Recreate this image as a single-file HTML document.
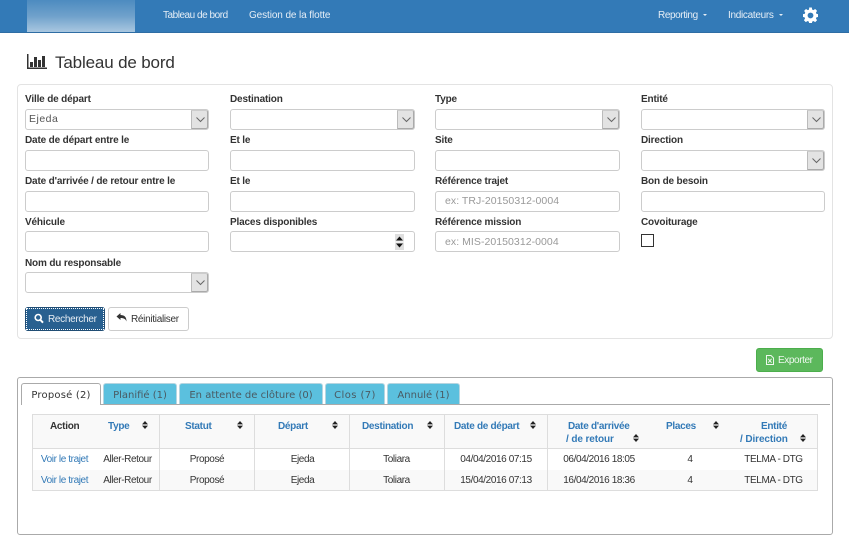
<!DOCTYPE html>
<html lang="fr"><head><meta charset="utf-8"><title>Tableau de bord</title>
<style>
*{box-sizing:border-box}
html,body{margin:0;padding:0;width:849px;height:547px;overflow:hidden;background:#fff;font-family:"Liberation Sans",Arial,sans-serif;color:#333}
.a{position:absolute;white-space:nowrap}
#nav{left:0;top:0;width:849px;height:33px;background:#337ab7;border-bottom:1px solid #2e6da4}
#logo{left:27px;top:0;width:108px;height:32px;background:linear-gradient(180deg,#4d8bc0 0%,#6fa1cb 50%,#a9c7e0 100%)}
.n{color:#e6eef6;font-size:10px;top:10px;line-height:12px}
.car{display:inline-block;width:0;height:0;border-top:2px solid #e6eef6;border-left:2.5px solid transparent;border-right:2.5px solid transparent;margin-left:5px;vertical-align:2px;letter-spacing:0}
.l{font-size:10px;font-weight:bold;line-height:12px;color:#333;letter-spacing:-.16px}
.i{background:#fff;border:1px solid #ccc;border-radius:3px;height:21px;width:185px;font-size:10.5px;line-height:19px;padding-left:8px}
.ph{color:#999;padding-left:9px;letter-spacing:.05px}
.sb{position:absolute;right:0;top:0;width:17px;height:19px;background:#e3e3e3;border-left:1px solid #bbb;border-right:1px solid #aaa;border-top:1px solid #ccc;border-bottom:1px solid #aaa;border-radius:0 2px 2px 0}
.sb svg{position:absolute;left:2px;top:4px}
.tab{top:383px;height:21px;background:#5bc0de;border:1px solid #b6d5e0;border-bottom:0;border-radius:3px 3px 0 0;font-family:"DejaVu Sans",sans-serif;font-size:10px;line-height:23px;text-align:center;color:#4a5a62}
.th{font-size:10px;font-weight:bold;line-height:13px;color:#337ab7;letter-spacing:-.3px}
.td{font-size:10px;line-height:12px;color:#333;transform:translateX(-50%);letter-spacing:-.4px}
.v{background:#ddd;width:1px}
.so{width:6px;height:8px}
</style></head><body>
<div class="a" id="nav"></div>
<div class="a" id="logo"></div>
<div class="a n" style="left:163px;letter-spacing:-.47px">Tableau de bord</div>
<div class="a n" style="left:249px;letter-spacing:-.1px">Gestion de la flotte</div>
<div class="a n" style="left:658px;letter-spacing:-.4px">Reporting<span class="car"></span></div>
<div class="a n" style="left:728px;letter-spacing:-.3px">Indicateurs<span class="car"></span></div>
<svg class="a" style="left:803px;top:7px" width="15" height="16" viewBox="0 0 16 16"><path fill="#fff" fill-rule="evenodd" d="M6.600 0h2.800l.4 2.200 1.300.6L13 1.600l2 2-1.200 1.900.6 1.300 2.200.4v2.800l-2.200.4-.6 1.300 1.200 1.900-2 2-1.900-1.200-1.300.6-.4 2.200H6.600l-.4-2.200-1.300-.6L3 15.600l-2-2 1.200-1.900-.6-1.300L-.4 10V7.200l2.200-.4.6-1.300L1.200 3.600l2-2 1.900 1.200 1.300-.6zM8 5.400a3.100 3.100 0 1 0 0 6.200 3.100 3.100 0 0 0 0-6.200z"/></svg>

<svg class="a" style="left:26px;top:53px" width="21" height="17" viewBox="0 0 21 17"><path fill="#333" d="M1 1h1.500v13.500H21V16H1z"/><rect x="4" y="9" width="3" height="5" fill="#333"/><rect x="8" y="4" width="3" height="10" fill="#333"/><rect x="12" y="7" width="3" height="7" fill="#333"/><rect x="16" y="3" width="3" height="11" fill="#333"/></svg>
<div class="a" style="left:55px;top:53px;font-size:17px;line-height:20px;color:#333;letter-spacing:-.15px">Tableau de bord</div>

<div class="a" style="left:17px;top:84px;width:816px;height:255px;border:1px solid #e3e3e3;border-radius:4px"></div>

<div class="a l" style="left:25px;top:94px">Ville de départ</div>
<div class="a l" style="left:230px;top:94px">Destination</div>
<div class="a l" style="left:435px;top:94px">Type</div>
<div class="a l" style="left:641px;top:94px">Entité</div>
<div class="a i" style="left:25px;top:109px;width:184px;color:#555;letter-spacing:.5px;padding-left:3px">Ejeda<div class="sb"><svg width="13" height="10" viewBox="0 0 13 10"><path d="M2.500 2.500l4 4 4-4" fill="none" stroke="#666" stroke-width="1"/></svg></div></div>
<div class="a i" style="left:230px;top:109px"><div class="sb"><svg width="13" height="10" viewBox="0 0 13 10"><path d="M2.500 2.500l4 4 4-4" fill="none" stroke="#666" stroke-width="1"/></svg></div></div>
<div class="a i" style="left:435px;top:109px"><div class="sb"><svg width="13" height="10" viewBox="0 0 13 10"><path d="M2.500 2.500l4 4 4-4" fill="none" stroke="#666" stroke-width="1"/></svg></div></div>
<div class="a i" style="left:641px;top:109px;width:184px"><div class="sb"><svg width="13" height="10" viewBox="0 0 13 10"><path d="M2.500 2.500l4 4 4-4" fill="none" stroke="#666" stroke-width="1"/></svg></div></div>

<div class="a l" style="left:25px;top:135px">Date de départ entre le</div>
<div class="a l" style="left:230px;top:135px">Et le</div>
<div class="a l" style="left:435px;top:135px">Site</div>
<div class="a l" style="left:641px;top:135px">Direction</div>
<div class="a i" style="left:25px;top:150px;width:184px"></div>
<div class="a i" style="left:230px;top:150px"></div>
<div class="a i" style="left:435px;top:150px"></div>
<div class="a i" style="left:641px;top:150px;width:184px"><div class="sb"><svg width="13" height="10" viewBox="0 0 13 10"><path d="M2.500 2.500l4 4 4-4" fill="none" stroke="#666" stroke-width="1"/></svg></div></div>

<div class="a l" style="left:25px;top:176px">Date d'arrivée / de retour entre le</div>
<div class="a l" style="left:230px;top:176px">Et le</div>
<div class="a l" style="left:435px;top:176px">Référence trajet</div>
<div class="a l" style="left:641px;top:176px">Bon de besoin</div>
<div class="a i" style="left:25px;top:191px;width:184px"></div>
<div class="a i" style="left:230px;top:191px"></div>
<div class="a i ph" style="left:435px;top:191px">ex: TRJ-20150312-0004</div>
<div class="a i" style="left:641px;top:191px;width:184px"></div>

<div class="a l" style="left:25px;top:217px">Véhicule</div>
<div class="a l" style="left:230px;top:217px">Places disponibles</div>
<div class="a l" style="left:435px;top:217px">Référence mission</div>
<div class="a l" style="left:641px;top:217px">Covoiturage</div>
<div class="a i" style="left:25px;top:231px;width:184px"></div>
<div class="a i" style="left:230px;top:231px"><svg style="position:absolute;left:164px;top:2px" width="9" height="16" viewBox="0 0 9 16"><rect width="9" height="16" fill="#dedede"/><rect y="7.500" width="9" height="1" fill="#fff"/><path d="M1 6.500L4.500 2.500 8 6.500zM1 9.500L4.500 13.500 8 9.500z" fill="#111"/></svg></div>
<div class="a i ph" style="left:435px;top:231px;line-height:20px">ex: MIS-20150312-0004</div>
<div class="a" style="left:641px;top:234px;width:13px;height:13px;border:1px solid #333;background:#fff"></div>

<div class="a l" style="left:25px;top:258px">Nom du responsable</div>
<div class="a i" style="left:25px;top:272px;width:184px"><div class="sb"><svg width="13" height="10" viewBox="0 0 13 10"><path d="M2.500 2.500l4 4 4-4" fill="none" stroke="#666" stroke-width="1"/></svg></div></div>

<div class="a" style="left:25px;top:307px;width:80px;height:24px;background:#286090;border:1px dotted #fff;outline:1px solid #204d74;outline-offset:-1px;border-radius:3px"></div>
<div class="a" style="left:26px;top:308px;width:78px;height:22px;border:1px dotted #fff"></div>
<svg class="a" style="left:34px;top:313px" width="10" height="11" viewBox="0 0 10 11"><circle cx="4.200" cy="4.500" r="3" fill="none" stroke="#fff" stroke-width="1.600"/><path d="M6.500 7l2.500 2.700" stroke="#fff" stroke-width="2"/></svg>
<div class="a" style="left:48px;top:314px;font-size:10px;line-height:12px;color:#e8eef4;letter-spacing:-.3px">Rechercher</div>
<div class="a" style="left:108px;top:307px;width:81px;height:24px;background:#fff;border:1px solid #ccc;border-radius:3px"></div>
<svg class="a" style="left:116px;top:313px" width="11" height="9" viewBox="0 0 11 9"><path d="M0.500 3.500L4.500 0v2c3.500 0 6 1.500 6 6.500C9.500 6 8 5 4.500 5v2z" fill="#333"/></svg>
<div class="a" style="left:131px;top:314px;font-size:10px;line-height:12px;color:#333;letter-spacing:-.3px">Réinitialiser</div>

<div class="a" style="left:756px;top:348px;width:67px;height:24px;background:#5cb85c;border:1px solid #4cae4c;border-radius:3px"></div>
<svg class="a" style="left:766px;top:355px" width="8" height="10" viewBox="0 0 8 10"><path d="M.5.500h4.500l2.500 2.500v6.500h-7z" fill="none" stroke="#eef7ee" stroke-width="1"/><path d="M2.200 3.800l3.400 3.900M5.600 3.800L2.200 7.700" stroke="#eef7ee" stroke-width="1"/></svg>
<div class="a" style="left:778px;top:355px;font-size:10px;line-height:12px;color:#eef7ee;letter-spacing:-.4px">Exporter</div>

<div class="a" style="left:17px;top:377px;width:816px;height:158px;border:1px solid #aaa;border-radius:3px"></div>
<div class="a" style="left:21px;top:404px;width:809px;height:1px;background:#aaa"></div>
<div class="a tab" style="left:21px;width:80px;height:22px;background:#fff;border:1px solid #aaa;border-bottom:0;color:#333;letter-spacing:.2px">Proposé (2)</div>
<div class="a tab" style="left:103px;width:74px">Planifié (1)</div>
<div class="a tab" style="left:179px;width:144px">En attente de clôture (0)</div>
<div class="a tab" style="left:325px;width:60px;letter-spacing:.4px">Clos (7)</div>
<div class="a tab" style="left:387px;width:73px">Annulé (1)</div>

<div class="a" style="left:32px;top:414px;width:786px;height:35px;background:#f9f9f9"></div>
<div class="a" style="left:32px;top:470px;width:786px;height:20px;background:#f9f9f9"></div>
<div class="a" style="left:32px;top:414px;width:786px;height:77px;border:1px solid #ddd"></div>
<div class="a" style="left:32px;top:448px;width:786px;height:1px;background:#ddd"></div>
<div class="a v" style="left:159px;top:414px;height:76px"></div>
<div class="a v" style="left:254px;top:414px;height:76px"></div>
<div class="a v" style="left:349px;top:414px;height:76px"></div>
<div class="a v" style="left:444px;top:414px;height:76px"></div>
<div class="a v" style="left:547px;top:414px;height:76px"></div>

<div class="a th" style="left:50px;top:420px;color:#333">Action</div>
<div class="a th" style="left:108px;top:420px">Type</div>
<div class="a th" style="left:185px;top:420px">Statut</div>
<div class="a th" style="left:278px;top:420px">Départ</div>
<div class="a th" style="left:362px;top:420px">Destination</div>
<div class="a th" style="left:454px;top:420px">Date de départ</div>
<div class="a th" style="left:568px;top:420px">Date d'arrivée</div>
<div class="a th" style="left:566px;top:433px;letter-spacing:-.1px">/ de retour</div>
<div class="a th" style="left:666px;top:420px">Places</div>
<div class="a th" style="left:761px;top:420px">Entité</div>
<div class="a th" style="left:740px;top:433px;letter-spacing:-.1px">/ Direction</div>

<svg class="a so" style="left:142px;top:421px" viewBox="0 0 6 8"><path d="M0 3.400L3 0l3 3.400zM0 4.600L3 8l3-3.400z" fill="#222"/></svg>
<svg class="a so" style="left:237px;top:421px" viewBox="0 0 6 8"><path d="M0 3.400L3 0l3 3.400zM0 4.600L3 8l3-3.400z" fill="#222"/></svg>
<svg class="a so" style="left:332px;top:421px" viewBox="0 0 6 8"><path d="M0 3.400L3 0l3 3.400zM0 4.600L3 8l3-3.400z" fill="#222"/></svg>
<svg class="a so" style="left:427px;top:421px" viewBox="0 0 6 8"><path d="M0 3.400L3 0l3 3.400zM0 4.600L3 8l3-3.400z" fill="#222"/></svg>
<svg class="a so" style="left:530px;top:421px" viewBox="0 0 6 8"><path d="M0 3.400L3 0l3 3.400zM0 4.600L3 8l3-3.400z" fill="#222"/></svg>
<svg class="a so" style="left:633px;top:434px" viewBox="0 0 6 8"><path d="M0 3.400L3 0l3 3.400zM0 4.600L3 8l3-3.400z" fill="#222"/></svg>
<svg class="a so" style="left:713px;top:421px" viewBox="0 0 6 8"><path d="M0 3.400L3 0l3 3.400zM0 4.600L3 8l3-3.400z" fill="#222"/></svg>
<svg class="a so" style="left:800px;top:434px" viewBox="0 0 6 8"><path d="M0 3.400L3 0l3 3.400zM0 4.600L3 8l3-3.400z" fill="#222"/></svg>

<div class="a td" style="left:64.500px;top:454px;color:#337ab7">Voir le trajet</div>
<div class="a td" style="left:127.500px;top:454px">Aller-Retour</div>
<div class="a td" style="left:207px;top:454px">Proposé</div>
<div class="a td" style="left:302.500px;top:454px">Ejeda</div>
<div class="a td" style="left:396.500px;top:454px">Toliara</div>
<div class="a td" style="left:496px;top:454px">04/04/2016 07:15</div>
<div class="a td" style="left:599px;top:454px">06/04/2016 18:05</div>
<div class="a td" style="left:690px;top:454px">4</div>
<div class="a td" style="left:773.500px;top:454px">TELMA - DTG</div>

<div class="a td" style="left:64.500px;top:475px;color:#337ab7">Voir le trajet</div>
<div class="a td" style="left:127.500px;top:475px">Aller-Retour</div>
<div class="a td" style="left:207px;top:475px">Proposé</div>
<div class="a td" style="left:302.500px;top:475px">Ejeda</div>
<div class="a td" style="left:396.500px;top:475px">Toliara</div>
<div class="a td" style="left:496px;top:475px">15/04/2016 07:13</div>
<div class="a td" style="left:599px;top:475px">16/04/2016 18:36</div>
<div class="a td" style="left:690px;top:475px">4</div>
<div class="a td" style="left:773.500px;top:475px">TELMA - DTG</div>
</body></html>
